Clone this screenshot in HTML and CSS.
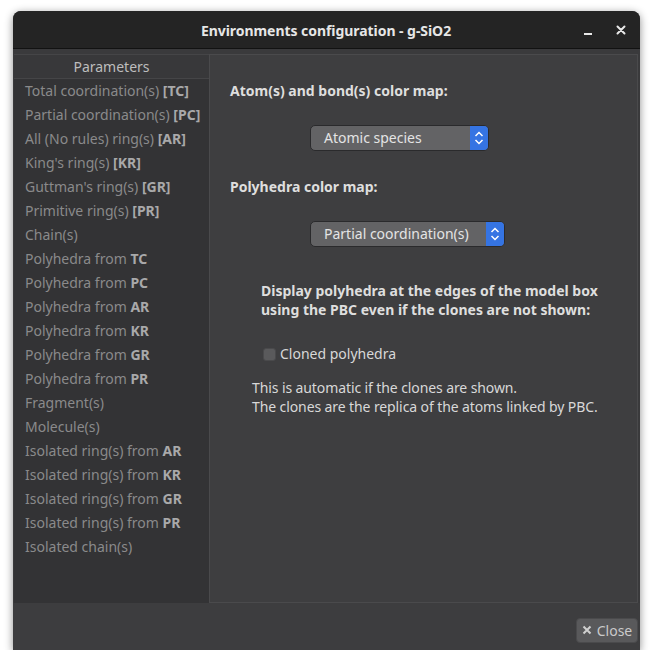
FILE: index.html
```html
<!DOCTYPE html>
<html>
<head>
<meta charset="utf-8">
<link rel="stylesheet" href="styles.css">
</head>
<body>
<div class="window">
  <div class="titlebar">
    <span class="title">Environments configuration - g-SiO2</span>
    <div class="tb-buttons">
      <span class="tb-min"></span>
      <svg class="tb-close" width="10" height="10" viewBox="0 0 10 10"><path d="M1.5 1.5 L8.5 8.5 M8.5 1.5 L1.5 8.5" stroke="#e8e8e8" stroke-width="2" stroke-linecap="round"/></svg>
    </div>
  </div>
  <div class="main">
    <div class="sidebar">
      <div class="side-head">Parameters</div>
      <ul class="side-list">
        <li>Total coordination(s) <b>[TC]</b></li>
        <li>Partial coordination(s) <b>[PC]</b></li>
        <li>All (No rules) ring(s) <b>[AR]</b></li>
        <li>King's ring(s) <b>[KR]</b></li>
        <li>Guttman's ring(s) <b>[GR]</b></li>
        <li>Primitive ring(s) <b>[PR]</b></li>
        <li>Chain(s)</li>
        <li>Polyhedra from <b>TC</b></li>
        <li>Polyhedra from <b>PC</b></li>
        <li>Polyhedra from <b>AR</b></li>
        <li>Polyhedra from <b>KR</b></li>
        <li>Polyhedra from <b>GR</b></li>
        <li>Polyhedra from <b>PR</b></li>
        <li>Fragment(s)</li>
        <li>Molecule(s)</li>
        <li>Isolated ring(s) from <b>AR</b></li>
        <li>Isolated ring(s) from <b>KR</b></li>
        <li>Isolated ring(s) from <b>GR</b></li>
        <li>Isolated ring(s) from <b>PR</b></li>
        <li>Isolated chain(s)</li>
      </ul>
    </div>
    <div class="content">
      <div class="label label-first">Atom(s) and bond(s) color map:</div>
      <div class="combo combo-1">
        <span class="combo-text">Atomic species</span>
        <span class="combo-arrow"><svg width="10" height="16" viewBox="0 0 10 16"><path d="M1.5 6 L5 2.5 L8.5 6 M1.5 10 L5 13.5 L8.5 10" fill="none" stroke="#fff" stroke-width="1.5"/></svg></span>
      </div>
      <div class="label label-second">Polyhedra color map:</div>
      <div class="combo combo-2">
        <span class="combo-text">Partial coordination(s)</span>
        <span class="combo-arrow"><svg width="10" height="16" viewBox="0 0 10 16"><path d="M1.5 6 L5 2.5 L8.5 6 M1.5 10 L5 13.5 L8.5 10" fill="none" stroke="#fff" stroke-width="1.5"/></svg></span>
      </div>
      <div class="label label-pbc">Display polyhedra at the edges of the model box<br>using the PBC even if the clones are not shown:</div>
      <label class="check"><span class="box"></span>Cloned polyhedra</label>
      <div class="note">This is automatic if the clones are shown.<br>The clones are the replica of the atoms linked by PBC.</div>
    </div>
  </div>
  <div class="footer">
    <button class="close-btn"><svg width="10" height="10" viewBox="0 0 10 10"><path d="M1.5 1.5 L8.5 8.5 M8.5 1.5 L1.5 8.5" stroke="#d0d0d0" stroke-width="2"/></svg>Close</button>
  </div>
</div>
</body>
</html>
```

FILE: styles.css
```css
html, body {
  margin: 0;
  padding: 0;
  background: #ffffff;
}
body {
  font-family: "Noto Sans", "Open Sans", sans-serif;
  font-size: 14px;
}
.window {
  width: 627px;
  height: 639px;
  margin: 11px 0 0 13px;
  background: #3d3d3f;
  border-radius: 8px 8px 0 0;
  box-shadow: 0 2px 8px rgba(0,0,0,0.45);
  display: flex;
  flex-direction: column;
  overflow: hidden;
}
.titlebar {
  height: 37px;
  flex: none;
  background: #242424;
  border-bottom: 1px solid #121212;
  display: flex;
  align-items: center;
  justify-content: center;
  position: relative;
}
.title {
  color: #e6e6e6;
  font-weight: bold;
  font-size: 14px;
  letter-spacing: -0.05px;
  margin-left: -1px;
  margin-top: 1px;
}
.tb-buttons {
  position: absolute;
  right: 14px;
  top: 0;
  height: 37px;
  display: flex;
  align-items: center;
  gap: 24px;
}
.tb-min {
  width: 8px;
  height: 2px;
  background: #e8e8e8;
  margin-top: 8px;
}
.main {
  flex: 1;
  display: flex;
  padding: 5px 2px 0 1px;
  background: #3a3a3c;
}
.sidebar {
  width: 195px;
  flex: none;
  background: #333335;
  display: flex;
  flex-direction: column;
}
.side-head {
  line-height: 23px;
  text-align: center;
  color: #bdbdbd;
  background: #38383a;
  border-top: 1px solid #454547;
  border-bottom: 1px solid #454547;
  box-sizing: border-box;
  height: 25px;
}
.side-list {
  list-style: none;
  margin: 0;
  padding: 0;
}
.side-list li {
  height: 24px;
  line-height: 24px;
  padding-left: 11px;
  color: #8a8a8b;
  white-space: nowrap;
}
.side-list b {
  color: #a9a9aa;
}
.content {
  flex: 1;
  background: #3e3e40;
  border: 1px solid #4a4a4c;
  display: flex;
  flex-direction: column;
  align-items: flex-start;
  padding-left: 20px;
}
.label {
  color: #dedede;
  font-weight: bold;
  line-height: 19px;
}
.label-first {
  margin-top: 26px;
}
.combo {
  display: flex;
  height: 26px;
  box-sizing: border-box;
  border: 1px solid #2a2a2c;
  border-radius: 5px;
  background: #636365;
  overflow: hidden;
  margin-left: 80px;
}
.combo-1 {
  width: 179px;
  margin-top: 25px;
}
.combo-2 {
  width: 195px;
  margin-top: 25px;
}
.combo-text {
  flex: 1;
  color: #e4e4e4;
  line-height: 24px;
  padding-left: 13px;
}
.combo-arrow {
  width: 18px;
  background: #3574e3;
  display: flex;
  align-items: center;
  justify-content: center;
}
.label-second {
  margin-top: 26px;
}
.label-pbc {
  margin-top: 34px;
  margin-left: 31px;
}
.check {
  margin-top: 25px;
  margin-left: 33px;
  display: flex;
  align-items: center;
  color: #d8d8d8;
  line-height: 20px;
}
.box {
  width: 13px;
  height: 13px;
  box-sizing: border-box;
  background: #5a5a5c;
  border: 1px solid #4a4a4c;
  border-radius: 3px;
  margin-right: 4px;
}
.note {
  margin-top: 14px;
  margin-left: 22px;
  color: #d8d8d8;
  line-height: 19px;
  letter-spacing: -0.1px;
}
.footer {
  height: 47px;
  flex: none;
  background: #3d3d3f;
  display: flex;
  align-items: center;
  justify-content: flex-end;
  padding-right: 2px;
}
.close-btn {
  font-family: inherit;
  font-size: 14px;
  color: #cacaca;
  background: #59595b;
  border: 1px solid #4a4a4c;
  border-radius: 4px;
  height: 25px;
  width: 62px;
  display: flex;
  align-items: center;
  justify-content: center;
  gap: 5px;
  padding: 0;
  margin-top: 7px;
}
```
